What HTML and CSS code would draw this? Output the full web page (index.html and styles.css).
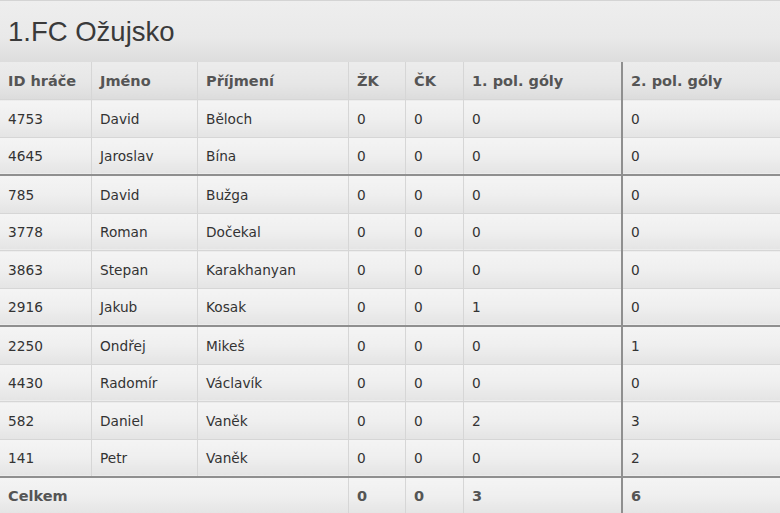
FILE: index.html
```html
<!DOCTYPE html>
<html>
<head>
<meta charset="utf-8">
<link rel="stylesheet" href="styles.css">
</head>
<body>
<div class="panel">
  <h1 class="title">1.FC Ožujsko</h1>
  <table class="stats">
    <thead>
      <tr>
        <th class="c1">ID hráče</th>
        <th class="c2">Jméno</th>
        <th class="c3">Příjmení</th>
        <th class="c4">ŽK</th>
        <th class="c5">ČK</th>
        <th class="c6">1. pol. góly</th>
        <th class="c7 split">2. pol. góly</th>
      </tr>
    </thead>
    <tbody>
      <tr><td>4753</td><td>David</td><td>Běloch</td><td>0</td><td>0</td><td>0</td><td class="split">0</td></tr>
      <tr class="groupend"><td>4645</td><td>Jaroslav</td><td>Bína</td><td>0</td><td>0</td><td>0</td><td class="split">0</td></tr>
      <tr><td>785</td><td>David</td><td>Bužga</td><td>0</td><td>0</td><td>0</td><td class="split">0</td></tr>
      <tr><td>3778</td><td>Roman</td><td>Dočekal</td><td>0</td><td>0</td><td>0</td><td class="split">0</td></tr>
      <tr><td>3863</td><td>Stepan</td><td>Karakhanyan</td><td>0</td><td>0</td><td>0</td><td class="split">0</td></tr>
      <tr class="groupend"><td>2916</td><td>Jakub</td><td>Kosak</td><td>0</td><td>0</td><td>1</td><td class="split">0</td></tr>
      <tr><td>2250</td><td>Ondřej</td><td>Mikeš</td><td>0</td><td>0</td><td>0</td><td class="split">1</td></tr>
      <tr><td>4430</td><td>Radomír</td><td>Václavík</td><td>0</td><td>0</td><td>0</td><td class="split">0</td></tr>
      <tr><td>582</td><td>Daniel</td><td>Vaněk</td><td>0</td><td>0</td><td>2</td><td class="split">3</td></tr>
      <tr class="groupend"><td>141</td><td>Petr</td><td>Vaněk</td><td>0</td><td>0</td><td>0</td><td class="split">2</td></tr>
    </tbody>
    <tfoot>
      <tr>
        <td colspan="3">Celkem</td>
        <td>0</td>
        <td>0</td>
        <td>3</td>
        <td class="split">6</td>
      </tr>
    </tfoot>
  </table>
</div>
</body>
</html>
```
FILE: styles.css
```css
html, body {
  margin: 0;
  padding: 0;
  background: #ffffff;
}

.panel {
  width: 780px;
  border-top: 1px solid #d4d4d4;
  font-family: "DejaVu Sans", Verdana, sans-serif;
  color: #333333;
}

.title {
  margin: 0;
  height: 61px;
  padding-left: 8px;
  box-sizing: border-box;
  display: flex;
  align-items: center;
  font-family: "Liberation Sans", Arial, sans-serif;
  font-weight: normal;
  font-size: 27.5px;
  color: #3a3a3a;
  background: linear-gradient(to bottom, #eeeeee 0%, #e9e9e9 60%, #dddddd 100%);
}

.stats {
  width: 780px;
  border-collapse: collapse;
  table-layout: fixed;
  font-size: 13.7px;
}

.stats th,
.stats td {
  text-align: left;
  padding: 0 0 0 8px;
  border-left: 1px solid #d6d6d6;
  border-bottom: 1px solid #d6d6d6;
  white-space: nowrap;
  background: linear-gradient(to bottom, #f4f4f4 0%, #efefef 50%, #e4e4e4 100%);
}

.stats th:first-child,
.stats td:first-child {
  border-left: none;
}

.stats th {
  height: 37px;
  font-weight: bold;
  font-size: 14.5px;
  color: #555555;
  background: linear-gradient(to bottom, #ececec 0%, #e6e6e6 60%, #dcdcdc 100%);
}

.stats tbody td {
  height: 35.5px;
  padding-top: 1px;
}

.stats .split {
  border-left: 2px solid #8f8f8f;
}

.stats tr.groupend td {
  border-bottom: 2px solid #8f8f8f;
}

.stats tfoot td {
  height: 36px;
  font-weight: bold;
  font-size: 14.5px;
  color: #555555;
  border-bottom: none;
}

.c1 { width: 83px; }
.c2 { width: 97px; }
.c3 { width: 142px; }
.c4 { width: 48px; }
.c5 { width: 49px; }
.c6 { width: 149px; }
.c7 { width: auto; }
```
